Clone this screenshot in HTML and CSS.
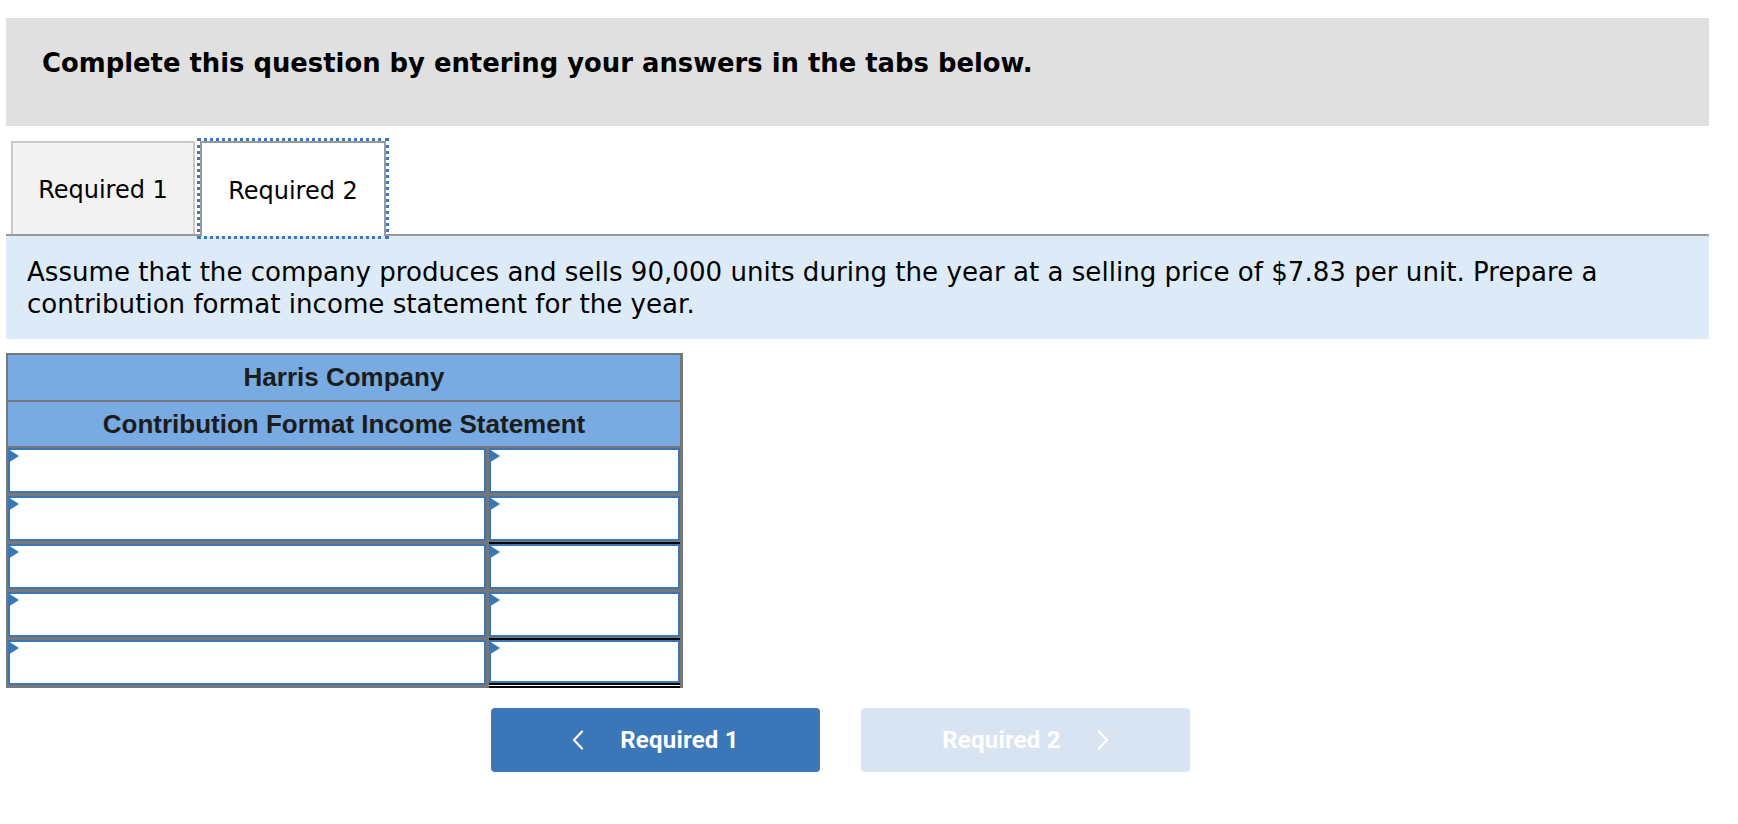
FILE: index.html
```html
<!DOCTYPE html>
<html lang="en">
<head>
<meta charset="utf-8">
<title>Required 2</title>
<link rel="stylesheet" href="styles.css">
</head>
<body>
<div class="page">
  <div class="banner">
    <h1 class="banner-title">Complete this question by entering your answers in the tabs below.</h1>
  </div>

  <div class="tabs">
    <div class="tab">Required 1</div>
    <div class="tab tab-active">Required 2</div>
  </div>

  <div class="prompt">
    <p>Assume that the company produces and sells 90,000 units during the year at a selling price of $7.83 per unit. Prepare a contribution format income statement for the year.</p>
  </div>

  <div class="statement">
    <div class="st-head st-company">Harris Company</div>
    <div class="st-head st-title">Contribution Format Income Statement</div>

    <div class="st-row">
      <div class="st-cell"><input class="st-input" type="text"><span class="marker"></span></div>
      <div class="st-cell"><input class="st-input" type="text"><span class="marker"></span></div>
    </div>
    <div class="st-row">
      <div class="st-cell"><input class="st-input" type="text"><span class="marker"></span></div>
      <div class="st-cell rule-single"><input class="st-input" type="text"><span class="marker"></span></div>
    </div>
    <div class="st-row">
      <div class="st-cell"><input class="st-input" type="text"><span class="marker"></span></div>
      <div class="st-cell"><input class="st-input" type="text"><span class="marker"></span></div>
    </div>
    <div class="st-row">
      <div class="st-cell"><input class="st-input" type="text"><span class="marker"></span></div>
      <div class="st-cell rule-single"><input class="st-input" type="text"><span class="marker"></span></div>
    </div>
    <div class="st-row">
      <div class="st-cell"><input class="st-input" type="text"><span class="marker"></span></div>
      <div class="st-cell rule-double"><input class="st-input st-input-short" type="text"><span class="marker"></span></div>
    </div>
  </div>

  <div class="nav">
    <button class="nav-btn nav-prev" type="button">
      <svg class="chev" width="12" height="20" viewBox="0 0 12 20" aria-hidden="true"><polyline points="10,1.5 2,10 10,18.5"/></svg>
      <span>Required 1</span>
    </button>
    <button class="nav-btn nav-next" type="button" disabled>
      <span>Required 2</span>
      <svg class="chev" width="12" height="20" viewBox="0 0 12 20" aria-hidden="true"><polyline points="2,1.5 10,10 2,18.5"/></svg>
    </button>
  </div>
</div>
</body>
</html>
```

FILE: styles.css
```css
body {
  margin: 0;
  background: #ffffff;
  color: #000000;
  font-family: "DejaVu Sans", Verdana, sans-serif;
}

.page {
  width: 1703px;
  padding: 18px 0 0 6px;
}

/* banner */
.banner {
  height: 108px;
  box-sizing: border-box;
  background: #e0e0e0;
  padding: 30px 0 0 36px;
}

.banner-title {
  margin: 0;
  font-size: 25.85px;
  font-weight: bold;
  line-height: 30px;
  color: #000;
}

/* tabs */
.tabs {
  display: flex;
  gap: 5px;
  height: 93px;
  margin-top: 15px;
  padding-left: 5px;
  border-bottom: 2px solid #9a9a9a;
}

.tab {
  width: 184px;
  box-sizing: border-box;
  display: flex;
  align-items: center;
  justify-content: center;
  padding-top: 3px;
  border: 2px solid #c8c8c8;
  border-bottom: 0;
  background: #f2f2f2;
  font-size: 24px;
  color: #000;
}

.tab-active {
  width: 186px;
  margin-bottom: -2px;
  border-color: #9a9a9a;
  background: #ffffff;
  outline: 3px dotted #3c78bd;
}

/* prompt */
.prompt {
  background: #dcebf7;
  padding: 21px 21px 19px 21px;
  font-size: 26.1px;
  line-height: 31.6px;
}

.prompt p {
  margin: 0;
}

/* statement table */
.statement {
  width: 677px;
  box-sizing: border-box;
  margin-top: 14px;
  padding: 2px 3px 0 2px;
  background: #777777;
}

.st-head {
  background: #78abe1;
  text-align: center;
  font-family: "Liberation Sans", Arial, sans-serif;
  font-weight: bold;
  font-size: 26px;
  color: #1c1c1c;
}

.st-company {
  height: 45px;
  line-height: 45px;
  margin-bottom: 2px;
}

.st-title {
  height: 44px;
  line-height: 44px;
  margin-bottom: 2px;
}

.st-row {
  display: grid;
  grid-template-columns: 478px 191px;
  column-gap: 3px;
}

.st-cell {
  position: relative;
  padding-bottom: 3px;
}

.st-input {
  display: block;
  width: 100%;
  height: 45px;
  box-sizing: border-box;
  margin: 0;
  padding: 0 14px;
  border: 2px solid #3a76b8;
  border-radius: 0;
  background: #ffffff;
  font-family: "DejaVu Sans", Verdana, sans-serif;
  font-size: 20px;
  outline: none;
}

.st-input-short {
  height: 43px;
}

.rule-single {
  padding-bottom: 1px;
  border-bottom: 2px solid #000000;
}

.rule-double {
  padding-bottom: 0;
  border-bottom: 5px double #000000;
  background: #ffffff;
}

.marker {
  position: absolute;
  left: 0;
  top: 1px;
  width: 0;
  height: 0;
  border-top: 7px solid transparent;
  border-bottom: 7px solid transparent;
  border-left: 11px solid #3a76b8;
}

/* navigation buttons */
.nav {
  display: flex;
  gap: 41px;
  margin: 20px 0 0 485px;
}

.nav-btn {
  width: 329px;
  height: 64px;
  display: flex;
  align-items: center;
  justify-content: center;
  gap: 36px;
  padding: 0;
  border: 0;
  border-radius: 4px;
  font-family: Roboto, "Liberation Sans", sans-serif;
  font-weight: 700;
  font-size: 24px;
  letter-spacing: 0.2px;
  color: #ffffff;
}

.nav-prev {
  background: #3a76b8;
}

.nav-next {
  background: #d8e4f2;
}

.chev {
  display: block;
}

.chev polyline {
  fill: none;
  stroke: #ffffff;
  stroke-width: 2.2;
  stroke-linecap: round;
  stroke-linejoin: round;
}
```
